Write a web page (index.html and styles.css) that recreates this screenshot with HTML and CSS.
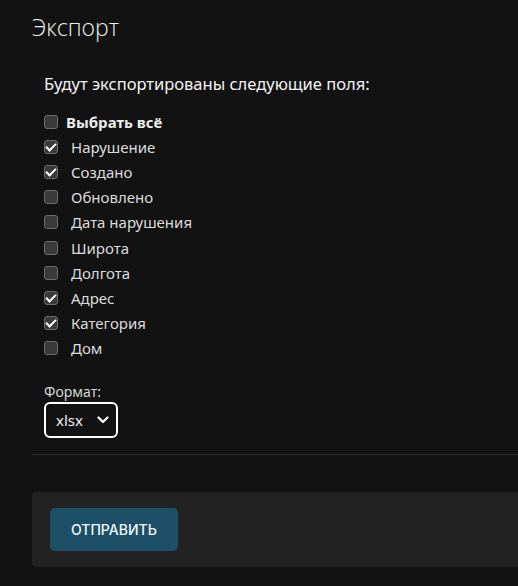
FILE: index.html
```html
<!DOCTYPE html>
<html lang="ru">
<head>
  <meta charset="UTF-8">
  <meta name="viewport" content="width=device-width, initial-scale=1.0">
  <title>Экспорт</title>
  <link rel="stylesheet" href="styles.css">
</head>
<body>
  <div class="dialog">
    <h1 class="title">Экспорт</h1>

    <div class="content">
      <p class="intro">Будут экспортированы следующие поля:</p>

      <div class="fields">
        <label class="field all"><input type="checkbox"> Выбрать всё</label>
        <label class="field"><input type="checkbox" checked> Нарушение</label>
        <label class="field"><input type="checkbox" checked> Создано</label>
        <label class="field"><input type="checkbox"> Обновлено</label>
        <label class="field"><input type="checkbox"> Дата нарушения</label>
        <label class="field"><input type="checkbox"> Широта</label>
        <label class="field"><input type="checkbox"> Долгота</label>
        <label class="field"><input type="checkbox" checked> Адрес</label>
        <label class="field"><input type="checkbox" checked> Категория</label>
        <label class="field"><input type="checkbox"> Дом</label>
      </div>

      <div class="format">
        <label class="format-label">Формат:</label>
        <div class="select">
          <span>xlsx</span>
          <svg width="12" height="8" viewBox="0 0 12 8"><path d="M1.5 1.5 6 6l4.5-4.5" fill="none" stroke="#fff" stroke-width="2.2" stroke-linecap="round" stroke-linejoin="round"/></svg>
        </div>
      </div>
    </div>

    <div class="divider"></div>

    <div class="actions">
      <button class="submit">Отправить</button>
    </div>
  </div>
</body>
</html>
```

FILE: styles.css
```css
body {
  margin: 0;
  background: #121212;
  color: #e4e4e4;
  font-family: "Noto Sans", "Open Sans", sans-serif;
  overflow: hidden;
}
.dialog {
  padding: 10px 0 0 32px;
}
.title {
  margin: 0;
  font-family: "Open Sans", sans-serif;
  font-weight: 300;
  font-size: 23px;
  line-height: 34px;
  color: #f0f0f0;
}
.content {
  padding: 0 0 16px 12px;
}
.intro {
  margin: 29px 0 14px;
  font-size: 16.5px;
  line-height: 22px;
  color: #f2f2f2;
}
.fields {
  display: flex;
  flex-direction: column;
}
.field {
  display: flex;
  align-items: center;
  height: 25.2px;
  font-size: 15px;
  color: #dcdcdc;
}
.field input {
  appearance: none;
  width: 14px;
  height: 14px;
  margin: 0 13px 0 0;
  border: 1px solid #6b6b6b;
  border-radius: 3px;
  background: #3a3a3a;
  position: relative;
}
.field input:checked::after {
  content: "";
  position: absolute;
  left: 3px;
  top: 0px;
  width: 4px;
  height: 8px;
  border: solid #fff;
  border-width: 0 2px 2px 0;
  transform: rotate(45deg);
}
.field.all {
  font-weight: 700;
  color: #ececec;
}
.field.all input {
  margin-right: 8px;
}
.format {
  margin-top: 23px;
  display: flex;
  flex-direction: column;
  align-items: flex-start;
}
.format-label {
  font-size: 14px;
  line-height: 16px;
  color: #d8d8d8;
}
.select {
  margin-top: 2px;
  box-sizing: border-box;
  width: 74px;
  height: 36px;
  border: 2px solid #fff;
  border-radius: 6px;
  display: flex;
  align-items: center;
  justify-content: space-between;
  padding: 0 7px 0 10px;
  font-size: 15px;
  color: #f0f0f0;
}
.divider {
  height: 1px;
  background: #2a2a2a;
}
.actions {
  margin-top: 37px;
  background: #222222;
  border-radius: 4px 0 0 4px;
  padding: 16px 18px;
}
.submit {
  background: #1d4f66;
  color: #f0f7fa;
  border: none;
  border-radius: 5px;
  height: 43px;
  padding: 0 21px;
  font-family: "Inter", sans-serif;
  font-weight: 500;
  font-size: 14px;
  text-transform: uppercase;
}
```
